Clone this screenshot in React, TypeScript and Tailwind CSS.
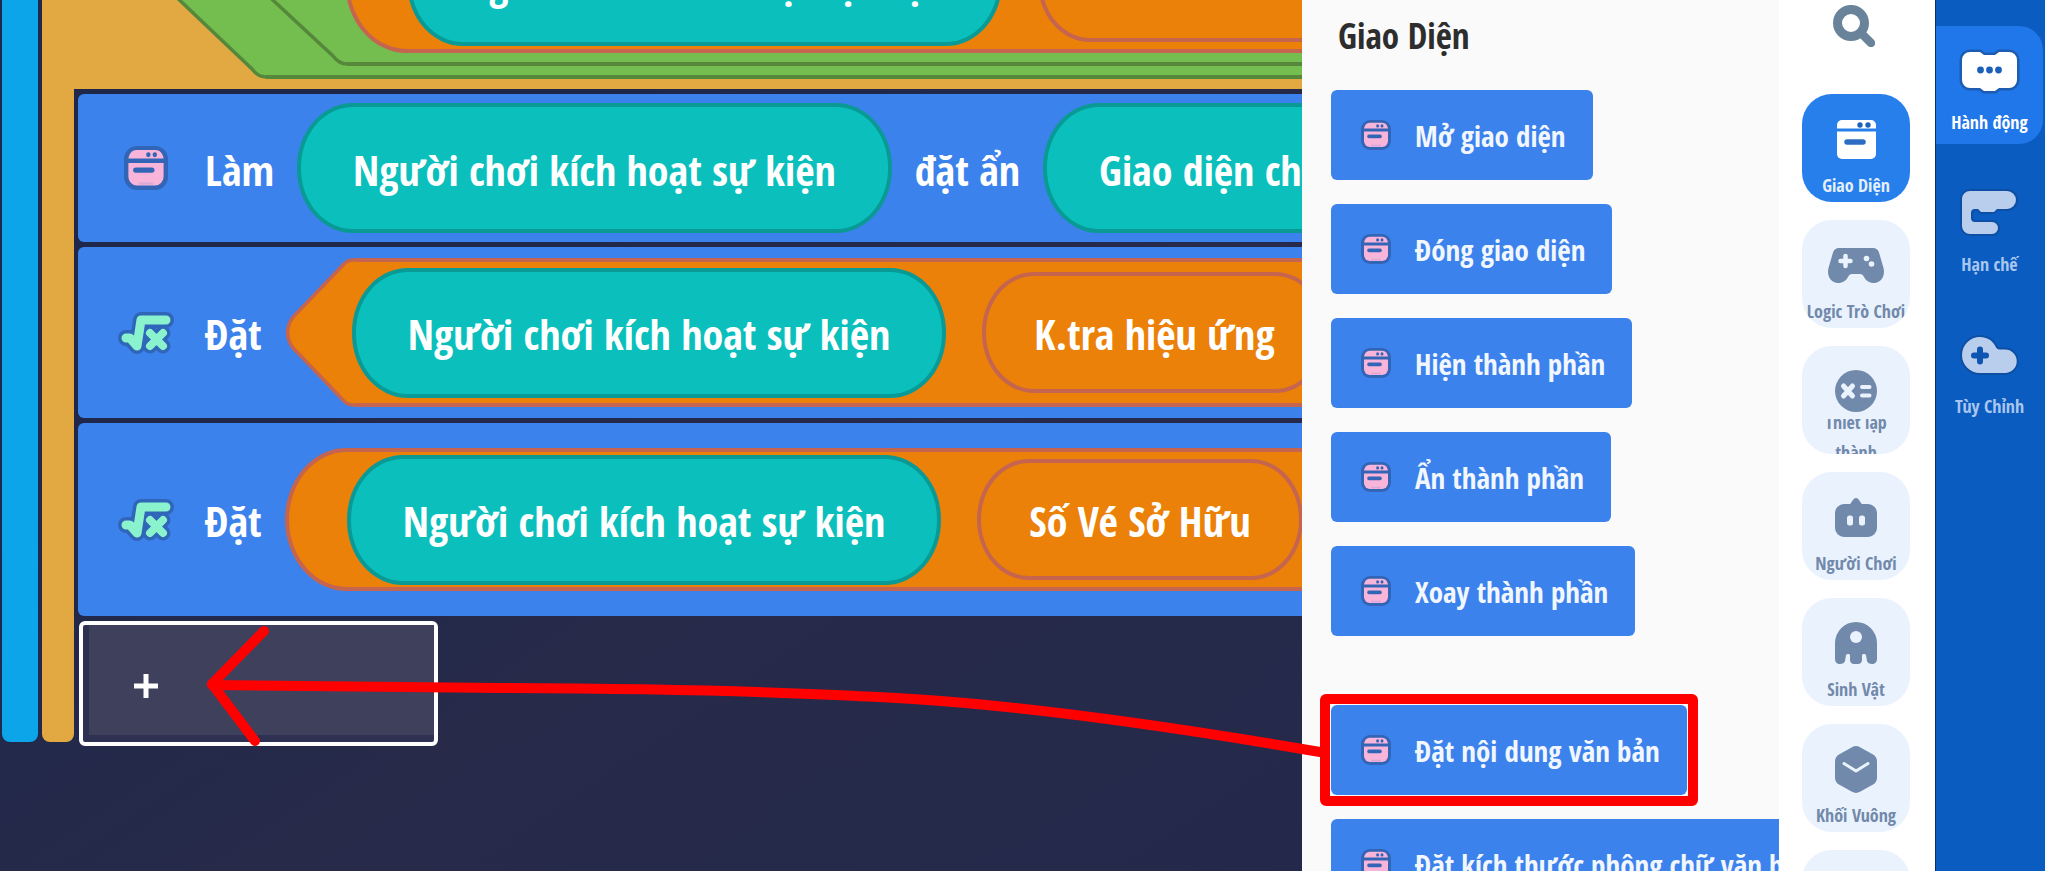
import React from "react";
import type { ReactNode } from "react";

const WindowIcon = ({ className }: { className?: string }) => (
  <svg viewBox="0 0 30 30" className={className} aria-hidden="true">
    <rect width="30" height="30" rx="9" fill="#3265b5" />
    <path d="M3 8.6C3.6 5 5.6 2.8 8.6 2.8h12.8c3 0 5 2.2 5.600 5.800z" fill="#f9b4da" />
    <path d="M3 11.600h24V21a6 6 0 0 1-6 6H9a6 6 0 0 1-6-6z" fill="#f9b4da" />
    <ellipse cx="16.600" cy="5.900" rx="1.500" ry="1.700" fill="#3265b5" />
    <ellipse cx="21" cy="5.900" rx="1.500" ry="1.700" fill="#3265b5" />
    <path d="M8 16.400h11" stroke="#3265b5" strokeWidth="3.600" strokeLinecap="round" />
    <path d="M10 25.600h10" stroke="#d9aad6" strokeWidth="1.600" />
  </svg>
);

const SqrtIcon = () => (
  <svg viewBox="0 0 56 44" className="h-11 w-14" aria-hidden="true">
    {[
      { color: "#2f66b8", root: 16, x: 15 },
      { color: "#8af2cd", root: 9, x: 8 },
    ].map((layer) => (
      <g
        key={layer.color}
        fill="none"
        stroke={layer.color}
        strokeLinecap="round"
        strokeLinejoin="round"
      >
        <path d="M8 27h4l7 8 4-26h25" strokeWidth={layer.root} />
        <path d="M32 22l13 13M45 22L32 35" strokeWidth={layer.x} />
      </g>
    ))}
  </svg>
);

const SearchIcon = () => (
  <svg viewBox="0 0 42 42" className="size-[42px]" aria-hidden="true">
    <circle cx="18" cy="18" r="13.500" fill="none" stroke="#69839b" strokeWidth="9" />
    <path d="M28 28l10 10" stroke="#69839b" strokeWidth="8.500" strokeLinecap="round" />
  </svg>
);

const InterfaceGlyph = () => (
  <svg viewBox="0 0 39 39" className="size-[39px]" aria-hidden="true">
    <path d="M0 8.500V5a5 5 0 0 1 5-5h29a5 5 0 0 1 5 5v3.500z" fill="#fff" />
    <path d="M0 11.500h39V34a5 5 0 0 1-5 5H5a5 5 0 0 1-5-5z" fill="#fff" />
    <circle cx="23" cy="5" r="2.700" fill="#1f62b8" />
    <circle cx="31" cy="5" r="2.700" fill="#1f62b8" />
    <path d="M10 22h16" stroke="#2c6dc4" strokeWidth="5.500" strokeLinecap="round" />
  </svg>
);

const GamepadGlyph = () => (
  <svg viewBox="0 0 56 35" className="h-[35px] w-14" aria-hidden="true">
    <path
      d="M11 0h34c3 0 5 1.500 6 4.500L55.500 20C57.500 28 53 35 46 35c-5 0-8-2.500-10-6-1-2-2-3-4-3h-8c-2 0-3 1-4 3-2 3.500-5 6-10 6C3 35-1.500 28 .500 20L5 4.500C6 1.500 8 0 11 0z"
      fill="#7189aa"
    />
    <path d="M12.500 13h10M17.500 8v10" stroke="#eaf2fe" strokeWidth="4.500" strokeLinecap="round" />
    <circle cx="38.500" cy="10.500" r="2.800" fill="#eaf2fe" />
    <circle cx="43.500" cy="16" r="2.800" fill="#eaf2fe" />
  </svg>
);

const FormulaGlyph = () => (
  <svg viewBox="0 0 42 42" className="size-[42px]" aria-hidden="true">
    <circle cx="21" cy="21" r="21" fill="#7189aa" />
    <g stroke="#eaf2fe" strokeLinecap="round">
      <path d="M8.500 16l9 10M17.500 16l-9 10" strokeWidth="5" />
      <path d="M27 17h7.500M27 25.500h7.500" strokeWidth="4" />
    </g>
  </svg>
);

const PlayerGlyph = () => (
  <svg viewBox="0 0 42 39" className="h-[39px] w-[42px]" aria-hidden="true">
    <path
      d="M9 6h6c1.500-1 3-6 6-6s4.500 5 6 6h6a9 9 0 0 1 9 9v15a9 9 0 0 1-9 9H9a9 9 0 0 1-9-9V15a9 9 0 0 1 9-9z"
      fill="#7189aa"
    />
    <rect x="12" y="17.500" width="6" height="10" rx="2.500" fill="#eaf2fe" />
    <rect x="24" y="17.500" width="6" height="10" rx="2.500" fill="#eaf2fe" />
  </svg>
);

const CreatureGlyph = () => (
  <svg viewBox="0 0 42 42" className="size-[42px]" aria-hidden="true">
    <path
      d="M0 21a21 21 0 0 1 42 0v16c0 3-2 5-5 5-2.500 0-4.500-1-5-3l-1-6c-.500-1.500-3.500-1.500-4 0v5c0 2-1.500 4-4 4h-4c-2.500 0-4-2-4-4v-5c0-1.500-3.500-1.500-4 0l-1 6c-.500 2-2.500 3-5 3-3 0-5-2-5-5z"
      fill="#7189aa"
    />
    <circle cx="21" cy="15" r="6" fill="#eaf2fe" />
  </svg>
);

const CubeGlyph = () => (
  <svg viewBox="0 0 42 47" className="h-[47px] w-[42px]" aria-hidden="true">
    <path
      d="M17 1.200q4-2.200 8 0l13 7.300q4 2.300 4 7v16q0 4.700-4 7l-13 7.300q-4 2.200-8 0L4 38.500q-4-2.300-4-7v-16q0-4.700 4-7z"
      fill="#7189aa"
    />
    <path
      d="M9 17.500l12 7.500 12-7.500"
      fill="none"
      stroke="#eaf2fe"
      strokeWidth="3"
      strokeLinecap="round"
      strokeLinejoin="round"
    />
  </svg>
);

const ActionGlyph = () => (
  <svg viewBox="-3 -3 61 47" className="h-[47px] w-[61px]" aria-hidden="true">
    <path
      d="M8 1h10l4 3h11l4-3h10a8 8 0 0 1 8 8v20a8 8 0 0 1-8 8H37l-4 3H22l-4-3H8a8 8 0 0 1-8-8V9a8 8 0 0 1 8-8z"
      fill="#fff"
      stroke="#1c5cb2"
      strokeWidth="5"
      paintOrder="stroke"
      strokeLinejoin="round"
    />
    <g fill="#1b5fb8">
      <circle cx="18.500" cy="19" r="3.400" />
      <circle cx="27.500" cy="19" r="3.400" />
      <circle cx="36.500" cy="19" r="3.400" />
    </g>
  </svg>
);

const LimitGlyph = () => (
  <svg viewBox="-3 -3 61 50" className="h-[50px] w-[61px]" aria-hidden="true">
    <path
      d="M8 0h37a9 9 0 0 1 0 18H35l-3 3H19l-3-3h-3a4 4 0 0 0-4 4v5a4 4 0 0 0 4 4h17a6 6 0 0 1 0 12H8a8 8 0 0 1-8-8V8a8 8 0 0 1 8-8z"
      fill="#b9cdec"
      stroke="#0c4fa4"
      strokeWidth="4"
      paintOrder="stroke"
      strokeLinejoin="round"
    />
  </svg>
);

const CustomGlyph = () => (
  <svg viewBox="-3 -3 61 42" className="h-[42px] w-[61px]" aria-hidden="true">
    <path
      d="M18 0c7 0 12.500 3.500 15.500 9.500 1 2 2 3 4 3H43a11.700 11.700 0 0 1 0 23.500H18A18 18 0 0 1 18 0z"
      fill="#b9cdec"
      stroke="#0c4fa4"
      strokeWidth="4"
      paintOrder="stroke"
    />
    <path d="M12 18.500h12M18 12.500v12" stroke="#0d55b0" strokeWidth="6" strokeLinecap="round" />
  </svg>
);

const Label = ({ children }: { children: ReactNode }) => (
  <span className="pt-[3px] text-[42px] leading-[56px]">{children}</span>
);

const ObjectPill = ({ children }: { children: ReactNode }) => (
  <div className="flex h-[130px] shrink-0 items-center rounded-[56px/64px] border-4 border-[#0a9a96] bg-[#0abfbc] px-[52px]">
    <Label>{children}</Label>
  </div>
);

const ValuePill = ({ children }: { children: ReactNode }) => (
  <div className="flex h-[121px] shrink-0 items-center rounded-[52px/60px] border-4 border-[#c5644f] bg-[#eb8108] px-12">
    <Label>{children}</Label>
  </div>
);

const PropertyPill = ({ children }: { children: ReactNode }) => (
  <div className="flex h-[143px] shrink-0 items-center gap-9 rounded-[62px/72px] border-4 border-[#c5644f] bg-[#eb8108] px-[58px]">
    {children}
  </div>
);

const Block = ({ className, icon, children }: { className: string; icon: ReactNode; children: ReactNode }) => (
  <div className={`flex items-center gap-[23px] rounded-l-md bg-[#3c82ec] pl-9 ${className}`}>
    <div className="mr-1 flex w-16 shrink-0 justify-center">{icon}</div>
    {children}
  </div>
);

const actions = [
  { id: 1, name: "Mở giao diện" },
  { id: 2, name: "Đóng giao diện" },
  { id: 3, name: "Hiện thành phần" },
  { id: 4, name: "Ẩn thành phần" },
  { id: 5, name: "Xoay thành phần" },
];

const textActions = [
  { id: 6, name: "Đặt nội dung văn bản", marked: true },
  { id: 7, name: "Đặt kích thước phông chữ văn bản", marked: false },
];

const categories = [
  { id: 1, name: "Giao Diện", icon: InterfaceGlyph, active: true },
  { id: 2, name: "Logic Trò Chơi", icon: GamepadGlyph },
  { id: 3, name: "Thiết lập\nthành", icon: FormulaGlyph },
  { id: 4, name: "Người Chơi", icon: PlayerGlyph },
  { id: 5, name: "Sinh Vật", icon: CreatureGlyph },
  { id: 6, name: "Khối Vuông", icon: CubeGlyph },
  { id: 7, name: "", icon: null },
];

const tabs = [
  { id: 1, name: "Hành động", icon: ActionGlyph, active: true },
  { id: 2, name: "Hạn chế", icon: LimitGlyph },
  { id: 3, name: "Tùy Chỉnh", icon: CustomGlyph },
];

const ActionButton = ({ name, marked }: { name: string; marked?: boolean }) => (
  <button
    type="button"
    className="relative flex h-[90px] shrink-0 items-center gap-6 rounded-md bg-[#3c82ec] pr-[27px] pl-[30px] text-[29px] text-[#f2f7ff]"
  >
    <WindowIcon className="size-[30px] shrink-0" />
    <span className="pt-0.5">{name}</span>
    {marked && <span className="absolute -inset-[11px] rounded-md border-[10px] border-[#fe0000]" />}
  </button>
);

const Workspace = () => (
  <main className="min-w-0 flex-1 overflow-hidden bg-linear-to-br from-[#1f284b] from-30% via-[#272a49] via-60% to-[#24294b] whitespace-nowrap text-white">
    <div className="flex">
      <div className="ml-0.5 w-9 shrink-0 rounded-b-lg bg-[#0ca5ea]" />
      <div className="ml-1 min-w-0 flex-1">
        <div className="h-[89px] overflow-hidden bg-[#e2a943]">
          <div className="-mt-[127px] flex h-[216px] items-center">
            <div className="w-[120px] shrink-0 pl-[38px]">
              <Label>Nếu</Label>
            </div>
            <svg viewBox="0 0 104 196" className="h-[196px] w-[104px] shrink-0" aria-hidden="true">
              <path
                d="M104 194Q96 194 90 186L8 108Q1 98 8 88L90 10Q96 2 104 2"
                fill="#73be4f"
                stroke="#55883b"
                strokeWidth="3.500"
              />
            </svg>
            <div className="flex h-[196px] shrink-0 items-center border-y-4 border-[#55883b] bg-[#73be4f]">
              <svg viewBox="0 0 94 170" className="-ml-[13px] h-[170px] w-[94px] shrink-0" aria-hidden="true">
                <path
                  d="M94 168Q86 168 80 160L8 93Q1 85 8 77L80 10Q86 2 94 2"
                  fill="#73be4f"
                  stroke="#55883b"
                  strokeWidth="3.500"
                />
              </svg>
              <div className="flex h-[170px] items-center border-y-4 border-[#55883b] pr-20">
                <div className="-ml-0.5">
                  <PropertyPill>
                    <ObjectPill>Người chơi kích hoạt sự kiện</ObjectPill>
                    <ValuePill>Số Vé Sở Hữu</ValuePill>
                  </PropertyPill>
                </div>
              </div>
            </div>
          </div>
        </div>
        <div className="flex">
          <div className="w-8 shrink-0 rounded-b-lg bg-[#e2a943]" />
          <div className="ml-1 flex min-w-0 flex-1 flex-col gap-[5px] pt-[5px]">
            <Block className="h-[148px]" icon={<WindowIcon className="size-11" />}>
              <Label>Làm</Label>
              <ObjectPill>Người chơi kích hoạt sự kiện</ObjectPill>
              <Label>đặt ẩn</Label>
              <ObjectPill>Giao diện chính</ObjectPill>
            </Block>
            <Block className="h-[171px]" icon={<SqrtIcon />}>
              <Label>Đặt</Label>
              <div className="flex items-center">
                <svg viewBox="0 0 71 149" className="h-[149px] w-[71px] shrink-0" aria-hidden="true">
                  <path
                    d="M71 147H68Q62 147 58 142L8 90Q-3 74.500 8 59L58 7Q62 2 68 2H71"
                    fill="#eb8108"
                    stroke="#c5644f"
                    strokeWidth="3.500"
                  />
                </svg>
                <div className="flex h-[149px] items-center gap-9 border-y-4 border-[#c5644f] bg-[#eb8108] pr-20">
                  <div className="-ml-1">
                    <ObjectPill>Người chơi kích hoạt sự kiện</ObjectPill>
                  </div>
                  <ValuePill>K.tra hiệu ứng</ValuePill>
                </div>
              </div>
            </Block>
            <Block className="h-[193px]" icon={<SqrtIcon />}>
              <Label>Đặt</Label>
              <PropertyPill>
                <ObjectPill>Người chơi kích hoạt sự kiện</ObjectPill>
                <ValuePill>Số Vé Sở Hữu</ValuePill>
              </PropertyPill>
            </Block>
            <button
              type="button"
              aria-label="Thêm"
              className="-mb-1 ml-px h-[125px] w-[359px] rounded-md border-4 border-white bg-[#2e3152] pb-[7px] pl-[6px]"
            >
              <span className="flex h-full items-center bg-[#3f415c] pt-3 pl-[45px]">
                <svg viewBox="0 0 24 24" className="size-6" aria-hidden="true">
                  <path d="M12 0v24M0 12h24" stroke="#fff" strokeWidth="5" />
                </svg>
              </span>
            </button>
          </div>
        </div>
      </div>
    </div>
  </main>
);

export default function App() {
  return (
    <div className='relative flex h-screen overflow-hidden bg-white font-["Open_Sans_Condensed","Open_Sans",sans-serif] font-semibold'>
      <Workspace />

      <section className="flex w-[477px] shrink-0 flex-col items-start overflow-hidden bg-[#fafafa] pt-4 pl-[29px] whitespace-nowrap">
        <h2 className="mb-[34px] ml-[7px] text-[35px] leading-10 text-[#2d2d2d]">Giao Diện</h2>
        <div className="flex flex-col items-start gap-6">
          {actions.map((action) => (
            <ActionButton key={action.id} name={action.name} />
          ))}
        </div>
        <div className="mt-[69px] flex flex-col items-start gap-6">
          {textActions.map((action) => (
            <ActionButton key={action.id} name={action.name} marked={action.marked} />
          ))}
        </div>
      </section>

      <nav className="flex w-[156px] shrink-0 flex-col items-center overflow-hidden pt-[5px] pr-0.5">
        <button type="button" aria-label="Tìm kiếm" className="mr-1 mb-[47px]">
          <SearchIcon />
        </button>
        <div className="flex flex-col gap-[18px]">
          {categories.map((category) => (
            <button
              key={category.id}
              type="button"
              className={`h-[108px] w-[108px] shrink-0 overflow-hidden rounded-[30px] pt-[21px] text-[18px] ${
                category.active ? "bg-[#267fea] text-[#e4effd]" : "bg-[#eaf2fe] text-[#7189aa]"
              }`}
            >
              <span className="flex h-12 items-center justify-center">{category.icon && <category.icon />}</span>
              <span className="mt-1 flex h-[35px] items-center justify-center overflow-hidden leading-[30px] whitespace-pre">
                {category.name}
              </span>
            </button>
          ))}
        </div>
      </nav>

      <aside className="flex w-[110px] shrink-0 flex-col gap-6 border-l border-[#0a2f66] bg-[#0a5cc0] pt-[26px] pr-0.5">
        {tabs.map((tab) => (
          <button
            key={tab.id}
            type="button"
            className={`flex h-[118px] flex-col items-center rounded-r-3xl pt-6 text-[18px] leading-6 ${
              tab.active ? "bg-[#2077ea] text-white" : "text-[#a9c6ee]"
            }`}
          >
            <span className="mb-[18px] flex h-[42px] items-center">
              <tab.icon />
            </span>
            {tab.name}
          </button>
        ))}
      </aside>

      {/* arrow from the marked block to the empty slot */}
      <svg
        viewBox="0 0 2045 871"
        className="pointer-events-none absolute top-0 left-0 h-[871px] w-[2045px]"
        fill="none"
        stroke="#fe0000"
        strokeWidth="10"
        strokeLinecap="round"
        strokeLinejoin="round"
        aria-hidden="true"
      >
        <path d="M1320 752Q1070 709 913 699T500 688L212 685" />
        <path d="M264 631L212 684L255 741" />
      </svg>
    </div>
  );
}
